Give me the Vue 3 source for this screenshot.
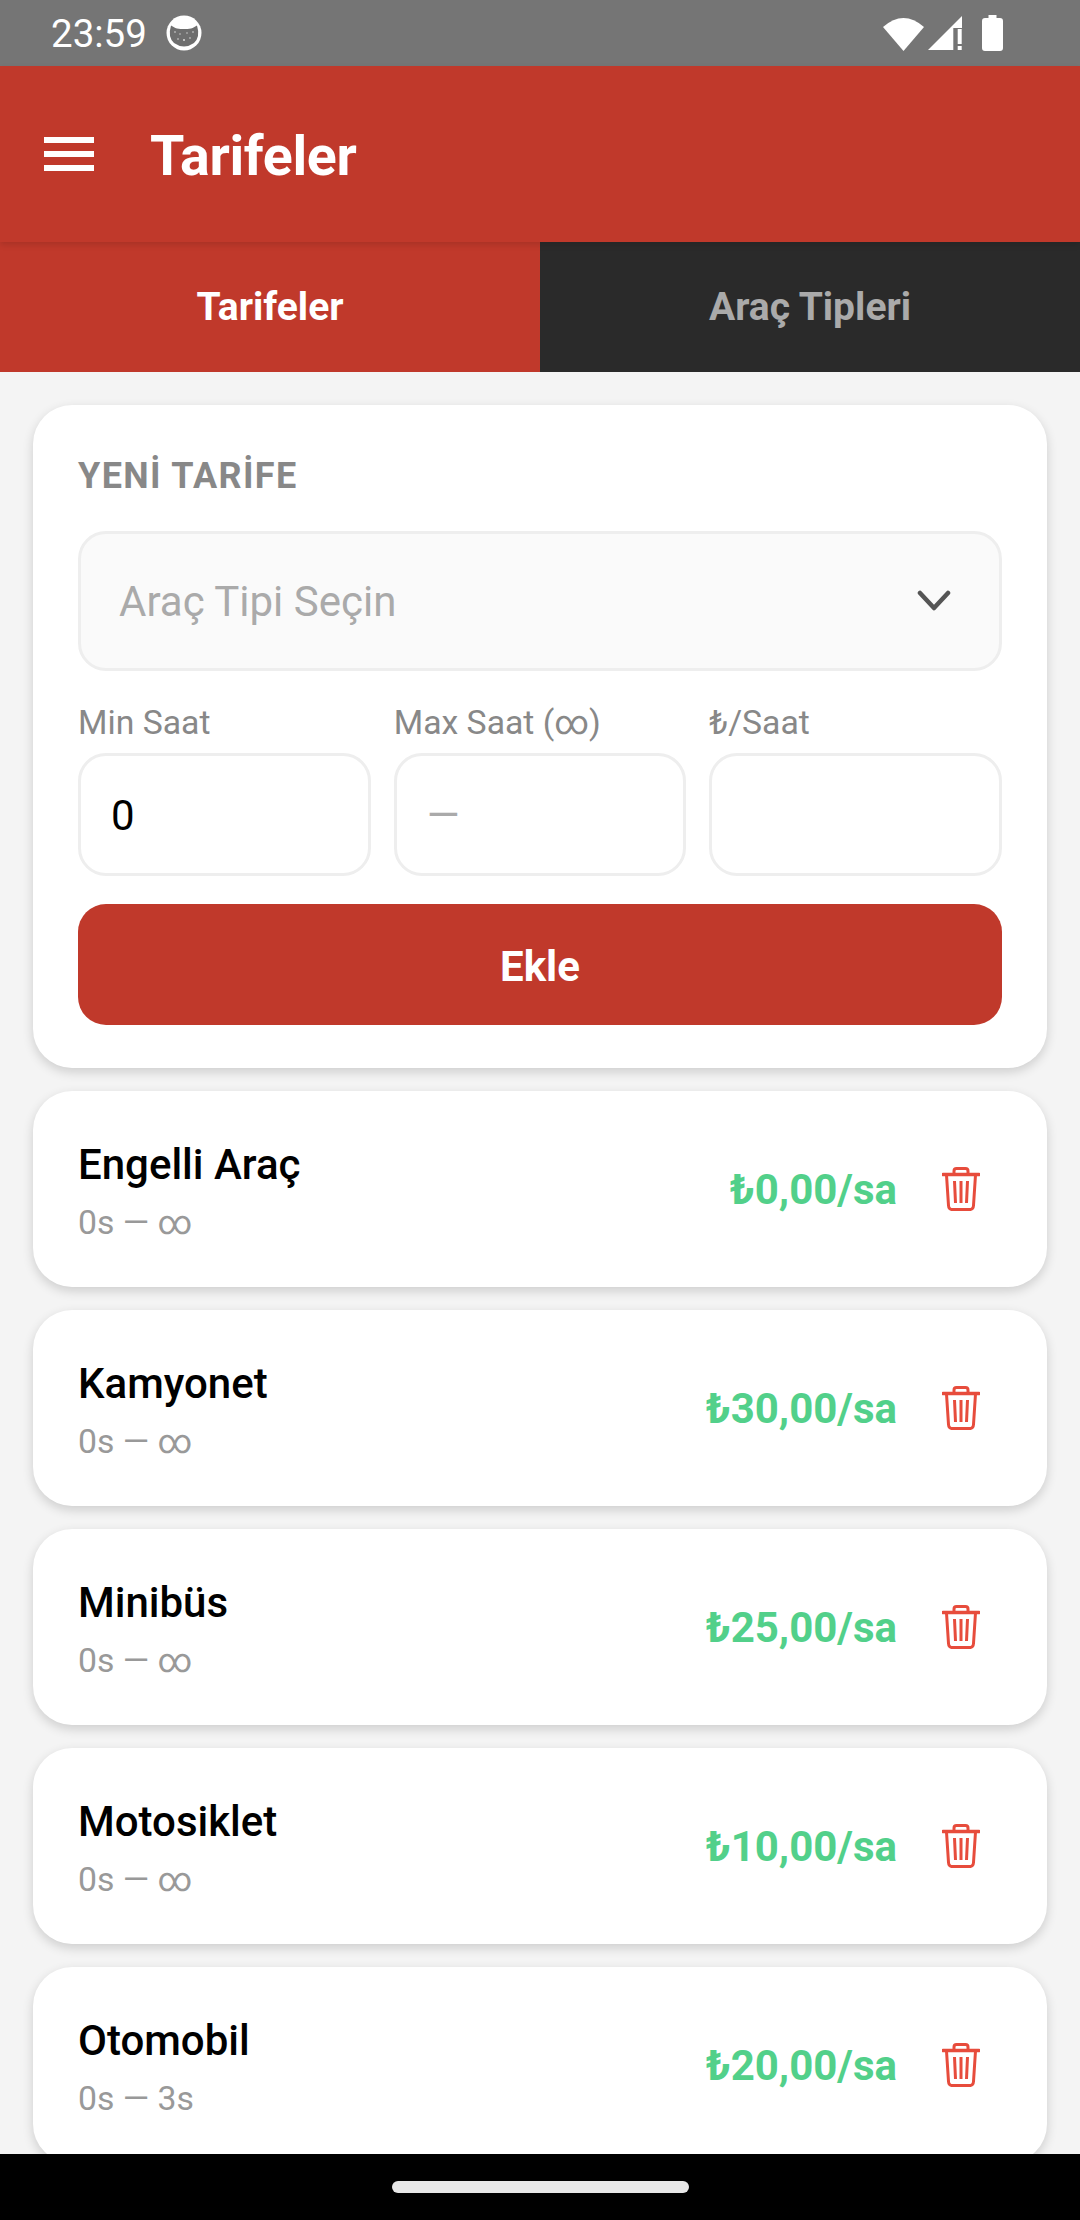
<template>
  <div class="screen">
    <!-- status bar -->
    <div class="status-bar">
      <span class="clock">23:59</span>
      <svg class="cat" width="36" height="36" viewBox="0 0 36 36">
        <circle cx="18" cy="18" r="17.5" fill="#fff" />
        <path d="M5 10.500 Q9 13 11 13.500 Q18 14.500 25 13.500 Q27 13 31 10.500 Q34.500 22 28 28 Q23 31.500 18 31.500 Q13 31.500 8 28 Q1.500 22 5 10.500Z" fill="#6e6e6e" />
        <circle cx="9" cy="17" r=".8" fill="#ddd" />
        <circle cx="14" cy="19" r=".7" fill="#ddd" />
        <circle cx="21" cy="18" r=".7" fill="#ddd" />
        <circle cx="27" cy="17" r=".8" fill="#ddd" />
        <circle cx="12" cy="24" r=".8" fill="#ddd" />
        <circle cx="18" cy="25" r="1" fill="#ddd" />
        <circle cx="24" cy="23" r=".8" fill="#ddd" />
      </svg>
      <div class="status-right">
        <svg width="41" height="35" viewBox="0 0 41 35">
          <path d="M0 11 Q20.500 -7 41 11 L20.500 35Z" fill="#fff" />
        </svg>
        <svg width="34" height="35" viewBox="0 0 34 35">
          <path d="M34 0V34H0Z" fill="#fff" />
          <rect x="25.300" y="12" width="9" height="23" fill="#757575" />
          <rect x="29.700" y="13" width="4" height="15" fill="#fff" />
          <rect x="29.700" y="30" width="4" height="4" fill="#fff" />
        </svg>
        <svg class="battery" width="21" height="36" viewBox="0 0 21 36">
          <path d="M6.500 0H14.500V3H18Q21 3 21 6V33Q21 36 18 36H3Q0 36 0 33V6Q0 3 3 3H6.500Z" fill="#fff" />
        </svg>
      </div>
    </div>

    <!-- header -->
    <header class="app-header">
      <button class="menu-btn">
        <span></span><span></span><span></span>
      </button>
      <h1 class="title">Tarifeler</h1>
    </header>

    <!-- tabs -->
    <nav class="tabs">
      <div class="tab active">Tarifeler</div>
      <div class="tab">Araç Tipleri</div>
    </nav>

    <main class="content">
      <section class="card form-card">
        <div class="section-title">YENİ TARİFE</div>
        <div class="select">
          <span>Araç Tipi Seçin</span>
          <svg width="34" height="22" viewBox="0 0 34 22">
            <path d="M3 3 L17 18 L31 3" fill="none" stroke="#555" stroke-width="4.500" stroke-linecap="round" stroke-linejoin="round" />
          </svg>
        </div>
        <div class="fields">
          <label v-for="f in fields" :key="f.label" class="field">
            <span class="field-label">{{ f.label }}</span>
            <input class="field-input" :value="f.value" :placeholder="f.placeholder" />
          </label>
        </div>
        <button class="add-btn">Ekle</button>
      </section>

      <article v-for="t in tariffs" :key="t.name" class="card tariff">
        <div class="tariff-info">
          <div class="tariff-name">{{ t.name }}</div>
          <div class="tariff-range">{{ t.range }}</div>
        </div>
        <div class="tariff-price">{{ t.price }}</div>
        <svg class="trash" width="38" height="44" viewBox="0 0 38 44" fill="none" stroke="#e74c3c">
          <path d="M1 7.500H37" stroke-width="3.400" stroke-linecap="round" />
          <path d="M12 7V4Q12 1.500 14.500 1.500H23.500Q26 1.500 26 4V7" stroke-width="3" />
          <path d="M4.500 8L6.500 38.500Q6.800 42.600 10.500 42.600H27.500Q31.200 42.600 31.500 38.500L33.500 8" stroke-width="3" />
          <path d="M12.500 14L13.500 36M19 14V36M25.500 14L24.500 36" stroke-width="3" />
        </svg>
      </article>
    </main>

    <!-- navigation bar -->
    <div class="nav-bar"><div class="nav-pill"></div></div>
  </div>
</template>

<script setup>
const fields = [
  { label: 'Min Saat', value: '0', placeholder: '' },
  { label: 'Max Saat (∞)', value: '', placeholder: '—' },
  { label: '₺/Saat', value: '', placeholder: '' }
];

const tariffs = [
  { name: 'Engelli Araç', range: '0s — ∞', price: '₺0,00/sa' },
  { name: 'Kamyonet', range: '0s — ∞', price: '₺30,00/sa' },
  { name: 'Minibüs', range: '0s — ∞', price: '₺25,00/sa' },
  { name: 'Motosiklet', range: '0s — ∞', price: '₺10,00/sa' },
  { name: 'Otomobil', range: '0s — 3s', price: '₺20,00/sa' }
];
</script>

<style>
html, body {
  margin: 0;
  background: #f4f4f4;
}
</style>

<style scoped>
.screen {
  display: flex;
  flex-direction: column;
  height: 2220px;
  overflow: hidden;
  font-family: Roboto, "Noto Sans", sans-serif;
  background: #f4f4f4;
}

.status-bar {
  flex: 0 0 66px;
  display: flex;
  align-items: center;
  padding: 0 77px 0 51px;
  background: #757575;
  color: #fff;
}
.clock {
  font-size: 38.500px;
}
.cat {
  margin-left: 19px;
}
.status-right {
  margin-left: auto;
  display: flex;
  align-items: center;
  gap: 4px;
}
.battery {
  margin-left: 16px;
}

.app-header {
  flex: 0 0 176px;
  display: flex;
  align-items: center;
  padding-left: 44px;
  box-sizing: border-box;
  background: #c0392b;
  position: relative;
  z-index: 1;
  box-shadow: 0 3px 6px rgba(0, 0, 0, 0.12);
}
.menu-btn {
  display: flex;
  flex-direction: column;
  gap: 8.500px;
  width: 50px;
  padding: 0;
  border: 0;
  background: none;
}
.menu-btn span {
  height: 5.500px;
  background: #fff;
}
.title {
  margin: 5px 0 0 56px;
  font-size: 55.500px;
  font-weight: 700;
  letter-spacing: -0.3px;
  color: #fff;
}

.tabs {
  flex: 0 0 130px;
  display: flex;
  background: #2a2a2a;
}
.tab {
  flex: 1;
  display: flex;
  align-items: center;
  justify-content: center;
  font-size: 39px;
  font-weight: 700;
  color: #aaa;
}
.tab.active {
  background: #c0392b;
  color: #fff;
}

.content {
  flex: 1;
  min-height: 0;
  overflow: hidden;
  display: flex;
  flex-direction: column;
  gap: 22.500px;
  padding: 33px 33px 0;
}

.card {
  flex-shrink: 0;
  background: #fff;
  border-radius: 39px;
  box-shadow: 0 4px 11px rgba(0, 0, 0, 0.16);
}

.form-card {
  height: 663px;
  box-sizing: border-box;
  padding: 51px 45px 0;
}
.section-title {
  font-size: 36px;
  line-height: 40px;
  font-weight: 700;
  letter-spacing: 1.350px;
  color: #888;
}
.select {
  display: flex;
  align-items: center;
  justify-content: space-between;
  height: 140px;
  box-sizing: border-box;
  margin-top: 35px;
  padding: 0 48px 0 38px;
  background: #fafafa;
  border: 3px solid #eee;
  border-radius: 28px;
  font-size: 42px;
  color: #aaa;
}
.fields {
  display: flex;
  gap: 23px;
  margin-top: 32px;
}
.field {
  flex: 1;
  min-width: 0;
  display: flex;
  flex-direction: column;
}
.field-label {
  height: 50px;
  font-size: 33.750px;
  line-height: 40px;
  color: #888;
}
.field-input {
  width: 100%;
  height: 123px;
  box-sizing: border-box;
  padding: 2px 30px 0;
  background: #fff;
  border: 3px solid #eee;
  border-radius: 28px;
  outline: none;
  font-family: inherit;
  font-size: 42px;
  color: #000;
}
.field-input::placeholder {
  color: #aaa;
  opacity: 1;
}
.add-btn {
  display: block;
  width: 100%;
  height: 121px;
  margin-top: 28px;
  padding: 4px 0 0;
  border: 0;
  border-radius: 28px;
  background: #c0392b;
  color: #fff;
  font-family: inherit;
  font-size: 42px;
  font-weight: 700;
}

.tariff {
  display: flex;
  align-items: center;
  height: 196.500px;
  box-sizing: border-box;
  padding: 0 67px 0 45px;
}
.tariff-info {
  flex: 1;
  padding-top: 5px;
}
.tariff-name {
  font-size: 42px;
  line-height: 50px;
  font-weight: 500;
  color: #000;
}
.tariff-range {
  margin-top: 13px;
  font-size: 33.750px;
  line-height: 40px;
  color: #999;
}
.tariff-price {
  padding-top: 2px;
  font-size: 42px;
  font-weight: 700;
  color: #52d08a;
}
.trash {
  margin-left: 45px;
  flex-shrink: 0;
}

.nav-bar {
  flex: 0 0 66px;
  display: flex;
  align-items: center;
  justify-content: center;
  background: #000;
}
.nav-pill {
  width: 297px;
  height: 12px;
  border-radius: 6px;
  background: #e8e8e8;
}
</style>
